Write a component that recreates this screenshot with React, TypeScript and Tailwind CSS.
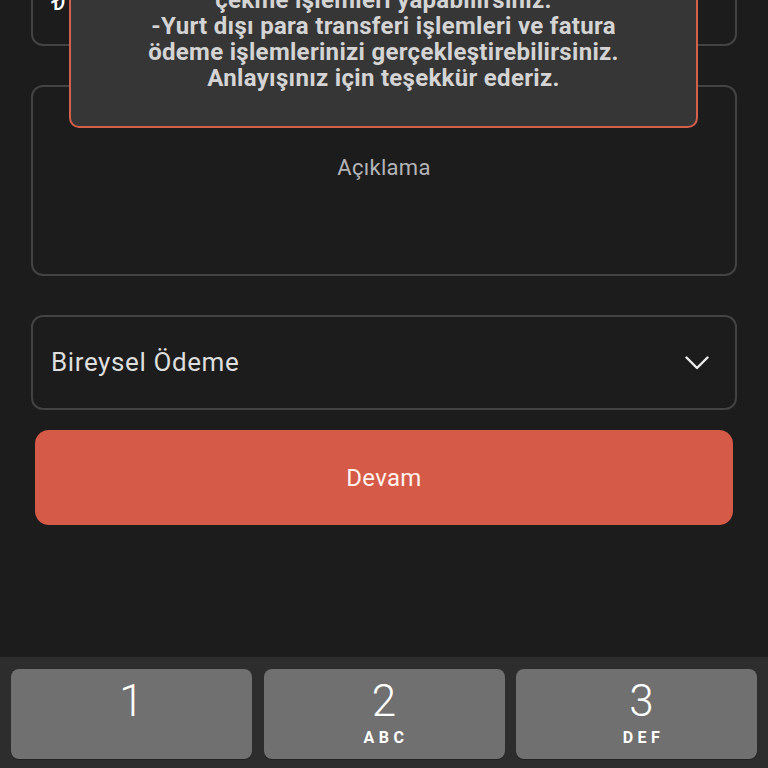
const keys = [
  { n: "1", l: "", shift: "" },
  { n: "2", l: "ABC", shift: "" },
  { n: "3", l: "DEF", shift: "pl-[10px]" },
];

export default function App() {
  return (
    <div className="relative flex h-[768px] w-[768px] flex-col overflow-hidden bg-[#1c1c1c] font-['Roboto','Noto_Sans',sans-serif]">
      {/* ── Form (page is scrolled, first field is cut off at the top) ── */}
      <div className="flex flex-1 flex-col px-[31px]">
        <div className="mt-[-49px] flex h-[95px] items-end rounded-[12px] border-2 border-[#434343] px-[18px] pb-[30px]">
          <span className="text-[26px] leading-none text-white">₺ 0,00</span>
        </div>

        <div className="mt-[39px] flex h-[191px] justify-center rounded-[12px] border-2 border-[#434343] pt-[70px]">
          <span className="text-[22px] leading-none tracking-[0.3px] text-[#b4b4b8]">Açıklama</span>
        </div>

        <div className="mt-[39px] flex h-[95px] items-center justify-between rounded-[12px] border-2 border-[#434343] pl-[18px] pr-[26px]">
          <span className="text-[26px] tracking-[0.6px] text-[#dedede]">Bireysel Ödeme</span>
          <svg width="24" height="14" viewBox="0 0 24 14" fill="none" className="text-[#ececec]">
            <polyline points="1.5,1.5 12,12 22.5,1.5" stroke="currentColor" strokeWidth="2.4" strokeLinecap="round" strokeLinejoin="round" />
          </svg>
        </div>

        <button className="mx-[4px] mt-[20px] flex h-[95px] items-center justify-center rounded-[14px] bg-[#d55a48] text-[24px] tracking-[0.3px] text-[#fff2ec]">
          Devam
        </button>
      </div>

      {/* ── Numeric keyboard ── */}
      <div className="grid h-[111px] grid-cols-3 gap-[11.5px] bg-[#2d2d2d] px-[11px] pt-[12px]">
        {keys.map((k) => (
          <div
            key={k.n}
            className={`flex h-[90px] flex-col items-center rounded-[8px] bg-[#707070] pt-[8px] shadow-[0_1px_0_#222] ${k.shift}`}
          >
            <span className="text-[44px] font-light leading-[48px] text-white">{k.n}</span>
            {k.l && (
              <span className="mt-[5px] pl-[4px] text-[16px] font-bold leading-none tracking-[4.5px] text-white">{k.l}</span>
            )}
          </div>
        ))}
      </div>

      {/* ── Info popup lying over the form ── */}
      <div className="absolute left-[69px] right-[70px] top-[-35px] rounded-[10px] border-2 border-[#d35f4c] bg-[#363636] pb-[35px] pt-[20px] text-center text-[24px] font-bold leading-[26px] tracking-[0.3px] text-[#d4d4d4]">
        <p>çekme işlemleri yapabilirsiniz.</p>
        <p>-Yurt dışı para transferi işlemleri ve fatura</p>
        <p>ödeme işlemlerinizi gerçekleştirebilirsiniz.</p>
        <p>Anlayışınız için teşekkür ederiz.</p>
      </div>
    </div>
  );
}
